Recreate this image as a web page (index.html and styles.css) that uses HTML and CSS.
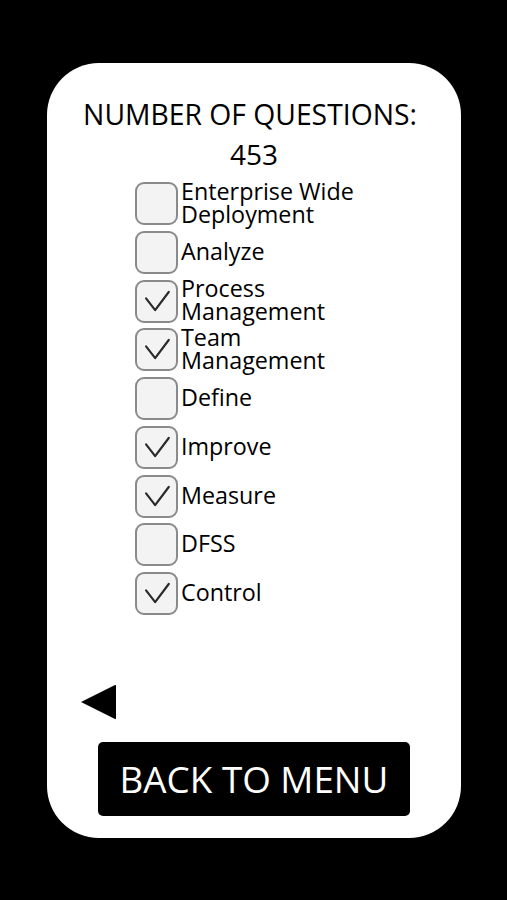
FILE: index.html
```html
<!DOCTYPE html>
<html>
<head>
<meta charset="utf-8">
<link rel="stylesheet" href="styles.css">
</head>
<body>
<div class="card">
  <div class="title">NUMBER OF QUESTIONS:</div>
  <div class="count">453</div>
  <ul class="list">
    <li class="item"><span class="box"></span><span class="label">Enterprise Wide<br>Deployment</span></li>
    <li class="item"><span class="box"></span><span class="label">Analyze</span></li>
    <li class="item"><span class="box checked"><svg viewBox="0 0 43 43"><path d="M10 18 L20 31 L35 11"/></svg></span><span class="label">Process<br>Management</span></li>
    <li class="item"><span class="box checked"><svg viewBox="0 0 43 43"><path d="M10 18 L20 31 L35 11"/></svg></span><span class="label">Team<br>Management</span></li>
    <li class="item"><span class="box"></span><span class="label">Define</span></li>
    <li class="item"><span class="box checked"><svg viewBox="0 0 43 43"><path d="M10 18 L20 31 L35 11"/></svg></span><span class="label">Improve</span></li>
    <li class="item"><span class="box checked"><svg viewBox="0 0 43 43"><path d="M10 18 L20 31 L35 11"/></svg></span><span class="label">Measure</span></li>
    <li class="item"><span class="box"></span><span class="label">DFSS</span></li>
    <li class="item"><span class="box checked"><svg viewBox="0 0 43 43"><path d="M10 18 L20 31 L35 11"/></svg></span><span class="label">Control</span></li>
  </ul>
  <div class="spacer"></div>
  <div class="nav"><svg class="back" viewBox="0 0 35 36"><path d="M0 18 L34 1 Q35 0.5 35 2 L35 34 Q35 35.5 34 35 Z"/></svg></div>
  <button class="menu">BACK TO MENU</button>
</div>
</body>
</html>
```

FILE: styles.css
```css
html, body {
  margin: 0;
  padding: 0;
  background: #000;
  height: 900px;
  overflow: hidden;
}
body {
  font-family: "Open Sans", "DejaVu Sans", sans-serif;
  color: #000;
}
.card {
  margin: 63px 0 0 47px;
  width: 414px;
  height: 775px;
  background: #fff;
  border-radius: 52px;
  box-sizing: border-box;
  padding-top: 31px;
  display: flex;
  flex-direction: column;
}
.title {
  text-align: center;
  font-size: 28.3px;
  line-height: 40px;
  padding-right: 8px;
}
.count {
  text-align: center;
  font-size: 28px;
  line-height: 40px;
}
.list {
  list-style: none;
  margin: 8px 0 0 88px;
  padding: 0;
  display: flex;
  flex-direction: column;
  gap: 5.75px;
}
.item {
  display: flex;
  align-items: center;
  gap: 3px;
  height: 43px;
}
.box {
  width: 43px;
  height: 43px;
  box-sizing: border-box;
  border: 2px solid #8a8a8a;
  border-radius: 9px;
  background: #f3f3f3;
  flex: none;
}
.box svg {
  display: block;
  width: 39px;
  height: 39px;
  margin: 0;
}
.box svg path {
  fill: none;
  stroke: #2a2a2a;
  stroke-width: 2.4;
  stroke-linecap: round;
  stroke-linejoin: round;
}
.label {
  font-size: 23.3px;
  line-height: 23px;
  margin-top: -2px;
}
.spacer {
  flex: 1;
}
.nav {
  padding-left: 34px;
  height: 36px;
}
.back {
  display: block;
  width: 35px;
  height: 36px;
  fill: #000;
}
.menu {
  margin: 22px 0 22px 51px;
  width: 312px;
  height: 74px;
  background: #000;
  color: #fff;
  border: none;
  border-radius: 5px;
  font-family: "Open Sans", "DejaVu Sans", sans-serif;
  font-size: 36.8px;
  padding: 0;
}
```
